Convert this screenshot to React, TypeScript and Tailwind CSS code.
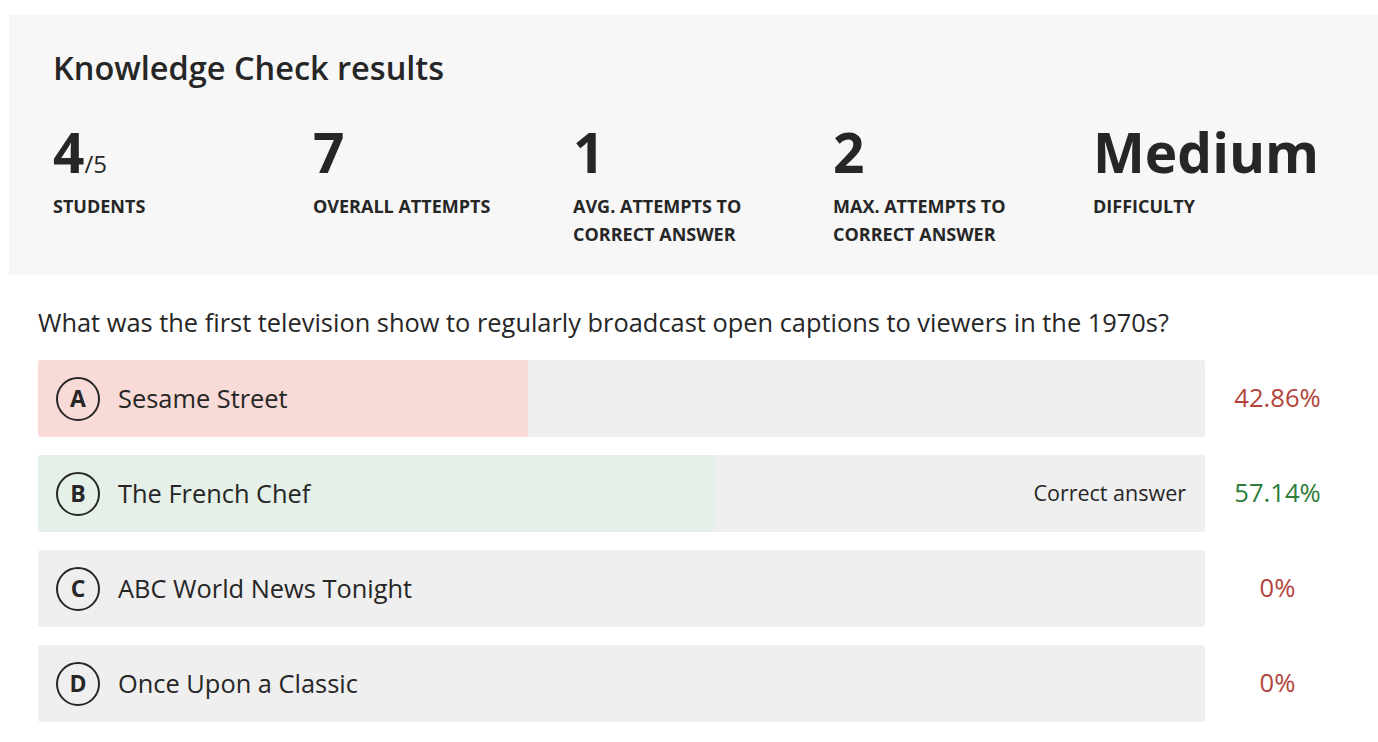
const stats = [
  { value: '4', suffix: '/5', label: ['STUDENTS'] },
  { value: '7', label: ['OVERALL ATTEMPTS'] },
  { value: '1', label: ['AVG. ATTEMPTS TO', 'CORRECT ANSWER'] },
  { value: '2', label: ['MAX. ATTEMPTS TO', 'CORRECT ANSWER'] },
  { value: 'Medium', label: ['DIFFICULTY'] },
]

const options = [
  { letter: 'A', text: 'Sesame Street', fill: 42, tone: 'wrong', pct: '42.86%' },
  { letter: 'B', text: 'The French Chef', fill: 58, tone: 'right', pct: '57.14%', correct: true },
  { letter: 'C', text: 'ABC World News Tonight', fill: 0, tone: 'wrong', pct: '0%' },
  { letter: 'D', text: 'Once Upon a Classic', fill: 0, tone: 'wrong', pct: '0%' },
]

export default function App() {
  return (
    <div className="min-h-screen bg-white pt-[15px] pl-[9px] font-['Open_Sans',sans-serif] text-[#262626]">
      {/* summary panel */}
      <section className="bg-[#f7f7f7] pl-[44px] pt-[33px] pb-[27px]">
        <h1 className="text-[32.5px] leading-[40px] font-semibold">Knowledge Check results</h1>
        <div className="mt-[36px] grid grid-cols-[repeat(5,260px)]">
          {stats.map((s) => (
            <div key={s.value}>
              <div className="flex items-baseline h-[56px] text-[55px] leading-[56px] font-bold">
                {s.value}
                {s.suffix && <span className="text-[24px] leading-none font-normal">{s.suffix}</span>}
              </div>
              <div className="mt-[12px] text-[18px] leading-[28px] font-bold">
                {s.label.map((l) => (
                  <div key={l}>{l}</div>
                ))}
              </div>
            </div>
          ))}
        </div>
      </section>

      {/* question */}
      <div className="pl-[29px]">
        <p className="mt-[31px] text-[25.4px] leading-[32px]">
          What was the first television show to regularly broadcast open captions to viewers in the 1970s?
        </p>
        <div className="mt-[22px] flex flex-col gap-[18px]">
          {options.map((o) => (
            <div key={o.letter} className="flex items-center">
              <div className="relative w-[1167px] h-[77px] rounded-[3px] overflow-hidden bg-[#efefef] flex items-center pl-[18px] pr-[19px]">
                <div
                  className={o.tone === 'right' ? 'absolute inset-y-0 left-0 bg-[#e5f0e8]' : 'absolute inset-y-0 left-0 bg-[#f8dad7]'}
                  style={{ width: `${o.fill}%` }}
                />
                <span className="relative w-[44px] h-[44px] shrink-0 rounded-full border-[2.5px] border-[#262626] flex items-center justify-center text-[23px] leading-none font-bold">
                  {o.letter}
                </span>
                <span className="relative ml-[18px] text-[25.4px]">{o.text}</span>
                {o.correct && <span className="relative ml-auto text-[21.5px]">Correct answer</span>}
              </div>
              <div className={o.tone === 'right' ? 'w-[145px] text-center text-[25.6px] font-medium text-[#2e7d3a]' : 'w-[145px] text-center text-[25.6px] font-medium text-[#b3443b]'}>
                {o.pct}
              </div>
            </div>
          ))}
        </div>
      </div>
    </div>
  )
}
